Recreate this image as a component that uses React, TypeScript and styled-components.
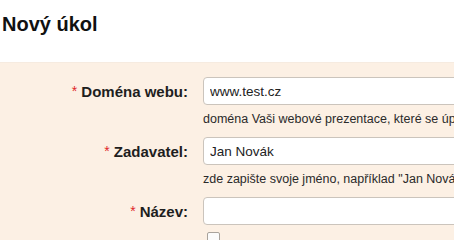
import React from "react";
import styled, { createGlobalStyle } from "styled-components";

const Global = createGlobalStyle`
  html, body { margin: 0; padding: 0; background: #ffffff; overflow: hidden; }
  body { font-family: "Liberation Sans", Arial, sans-serif; color: #222; }
`;

const Page = styled.div`
  width: 454px;
  height: 240px;
  overflow: hidden;
`;

const Title = styled.h1`
  margin: 0;
  padding: 12px 0 0 2px;
  font-size: 20px;
  line-height: 24px;
  font-weight: bold;
  color: #111;
  height: 50px;
  box-sizing: border-box;
`;

const Panel = styled.div`
  margin-top: 12px;
  background: #fcf0e4;
  border-top: 1px solid #f6ebe0;
  padding: 14px 0 20px 0;
  display: grid;
  grid-template-columns: 188px 320px;
  column-gap: 15px;
  align-items: start;
`;

const Label = styled.label`
  grid-column: 1;
  height: 28px;
  display: flex;
  align-items: center;
  justify-content: flex-end;
  font-size: 15px;
  font-weight: bold;
  color: #1e1e1e;
  white-space: nowrap;
`;

const Star = styled.span`
  color: #e0262b;
  font-weight: normal;
  margin-right: 4px;
  align-self: flex-start;
  margin-top: 6px;
  font-size: 14px;
`;

const Field = styled.div<{ $last?: boolean }>`
  grid-column: 2;
  display: flex;
  flex-direction: column;
  margin-bottom: ${(p) => (p.$last ? "0" : "9px")};
`;

const Input = styled.input`
  box-sizing: border-box;
  width: 100%;
  height: 28px;
  border: 1px solid #cbc4bc;
  border-radius: 4px;
  background: #fff;
  padding: 0 6px;
  font-family: "Liberation Sans", Arial, sans-serif;
  font-size: 13.5px;
  color: #222;
  outline: none;
`;

const Help = styled.div`
  margin-top: 5px;
  font-size: 12.5px;
  line-height: 18px;
  color: #2a2a2a;
  white-space: nowrap;
`;

const CheckRow = styled.div`
  grid-column: 2;
  display: flex;
  align-items: center;
  margin-top: 7px;
`;

const Check = styled.span`
  display: inline-block;
  width: 11px;
  height: 11px;
  margin-left: 4px;
  border: 1px solid #a9a39c;
  border-radius: 2px;
  background: #fbfbfb;
`;

export default function App() {
  return (
    <Page>
      <Global />
      <Title>Nový úkol</Title>
      <Panel>
        <Label>
          <Star>*</Star>Doména webu:
        </Label>
        <Field>
          <Input defaultValue="www.test.cz" />
          <Help>doména Vaši webové prezentace, které se úprava týká</Help>
        </Field>
        <Label>
          <Star>*</Star>Zadavatel:
        </Label>
        <Field>
          <Input defaultValue="Jan Novák" />
          <Help>zde zapište svoje jméno, například "Jan Novák"</Help>
        </Field>
        <Label>
          <Star>*</Star>Název:
        </Label>
        <Field $last>
          <Input defaultValue="" />
        </Field>
        <CheckRow>
          <Check />
        </CheckRow>
      </Panel>
    </Page>
  );
}
